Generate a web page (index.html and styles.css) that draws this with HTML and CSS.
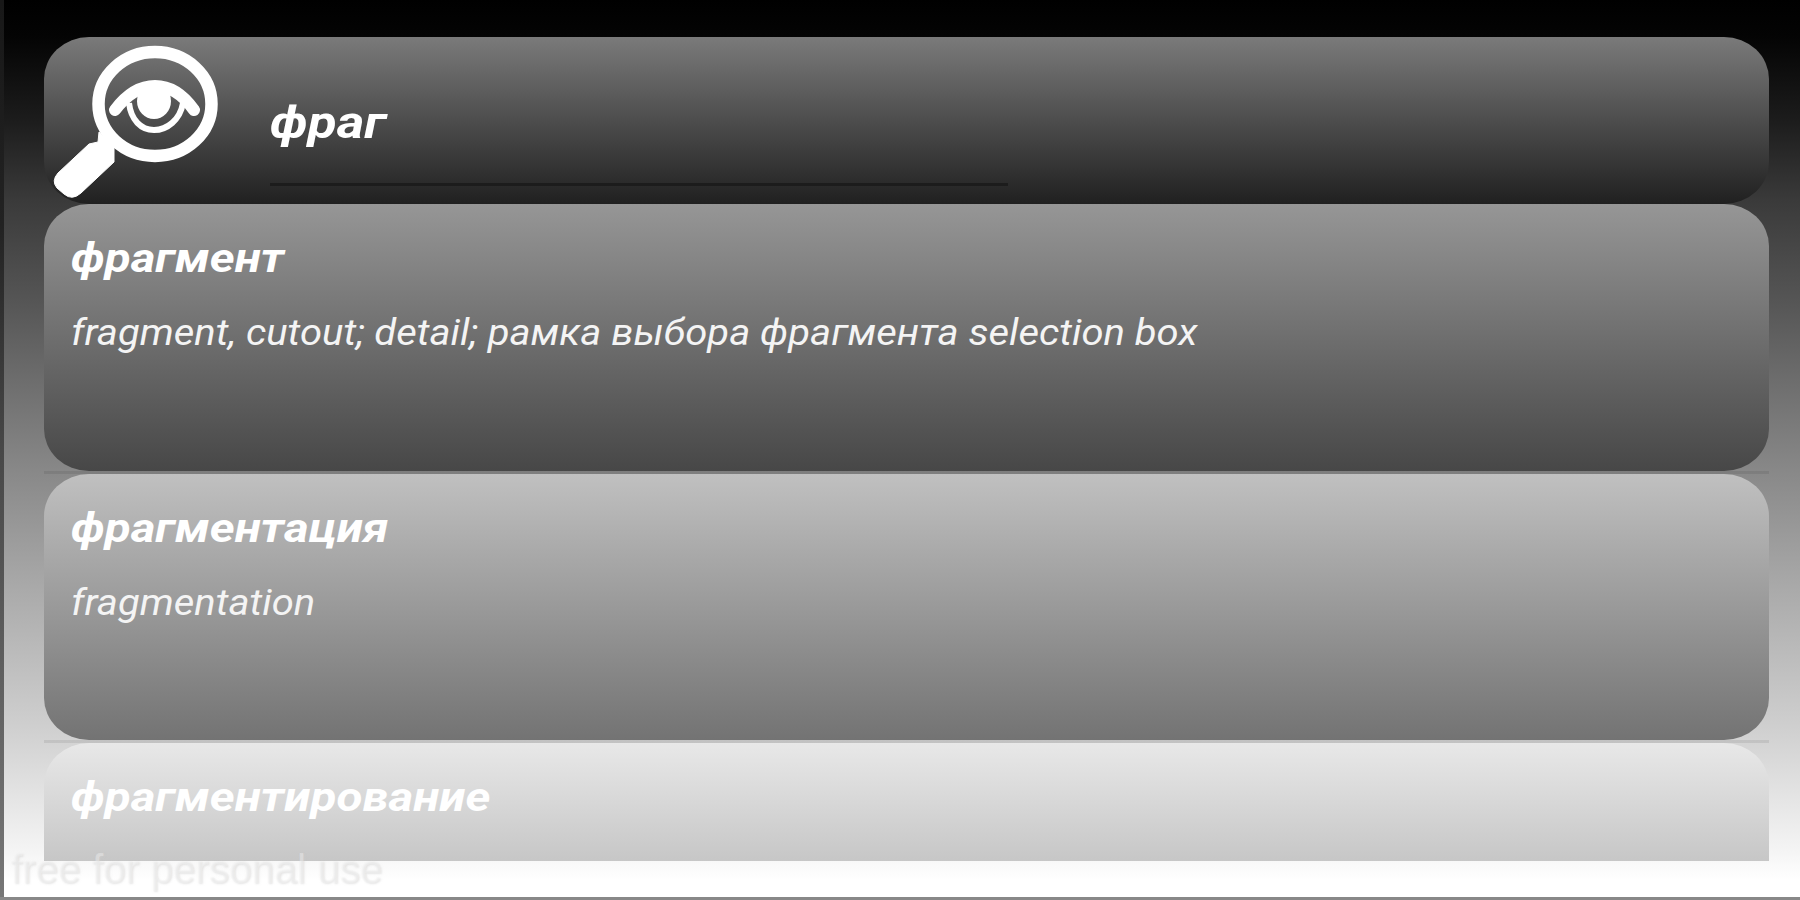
FILE: index.html
```
<!DOCTYPE html>
<html lang="ru">
<head>
  <meta charset="UTF-8">
  <title>Словарь</title>
  <meta name="viewport" content="width=device-width, initial-scale=1.0">
  <link rel="stylesheet" href="styles.css">
</head>
<body>
  <div class="screen">
    <!-- Search bar -->
    <header class="search-bar">
      <svg class="logo" width="176" height="167" viewBox="44 37 176 167" fill="none" stroke="#fff">
        <ellipse cx="155" cy="104" rx="56.5" ry="52" stroke-width="12.5"/>
        <path d="M99 132l15 14v16l-33 31q-9 8-17 1l-7-6q-6-7 1-15l31-29 9-2z" fill="#fff" stroke-width="1"/>
        <path d="M115 110Q133 86 155 86T194 110" stroke-width="12" stroke-linecap="round"/>
        <ellipse cx="154" cy="101" rx="17" ry="18" fill="#fff" stroke="none"/>
        <path d="M129 103c2 17 12 27 25 27s26-10 29-27" stroke-width="6"/>
      </svg>
      <div class="search-field"><span>фраг</span></div>
    </header>

    <!-- Results -->
    <main class="results">
      <article class="card card-dark">
        <h2>фрагмент</h2>
        <p>fragment, cutout; detail; рамка выбора фрагмента selection box</p>
      </article>
      <div class="divider"></div>
      <article class="card card-mid">
        <h2>фрагментация</h2>
        <p>fragmentation</p>
      </article>
      <div class="divider"></div>
      <article class="card card-light">
        <h2>фрагментирование</h2>
      </article>
    </main>
    <div class="watermark">free for personal use</div>
  </div>
</body>
</html>
```
FILE: styles.css
```
* { box-sizing: border-box; }
body {
  font-family: Roboto, Arial, sans-serif;
  margin: 0;
  color: #fff;
}
.screen {
  position: relative;
  height: 900px;
  padding: 37px 31px 0 44px;
  overflow: hidden;
  background:
    linear-gradient(#888, #888) 0 100% / 100% 3px no-repeat,
    linear-gradient(#181818, #222 25%, #484848 50%, #777) 0 0 / 4px 100% no-repeat,
    linear-gradient(#000 0, #040404 36px, #1c1c1c 120px, #3a3a3a 200px, #555 300px, #858585 460px, #aaa 590px, #d0d0d0 730px, #f4f4f4 850px, #fff 880px);
}
.search-bar {
  display: flex;
  height: 167px;
  border-radius: 45px / 42px;
  background: linear-gradient(#7a7a7a, #202020);
}
.logo { flex: none; }
.search-field {
  width: 738px;
  height: 149px;
  margin-left: 50px;
  padding-top: 59px;
  border-bottom: 3px solid #1c1c1c;
  font-size: 45px;
  line-height: 54px;
  font-weight: bold;
  font-style: italic;
}
.search-field span {
  display: inline-block;
  transform: scaleX(1.18);
  transform-origin: left;
}
.results {
  height: 657px;
  overflow: hidden;
}
.card {
  height: 267px;
  padding: 29px 27px;
  border-radius: 45px / 42px;
}
.card-dark { background: linear-gradient(#969696, #474747); }
.card-mid { height: 266px; background: linear-gradient(#c0c0c0, #737373); }
.card-light { background: linear-gradient(#e8e8e8, #9c9c9c); }
.divider {
  height: 3px;
  background: rgba(0, 0, 0, 0.08);
}
.card h2 {
  margin: 0;
  font-size: 41px;
  line-height: 50px;
  font-style: italic;
  transform: scaleX(1.16);
  transform-origin: left;
}
.card p {
  margin: 28px 0 0;
  font-size: 37px;
  line-height: 44px;
  font-style: italic;
  white-space: nowrap;
  color: #f4f4f4;
  transform: scaleX(1.081);
  transform-origin: left;
}
/* sits over the bottom edge of the list */
.watermark {
  position: absolute;
  left: 11px;
  bottom: 8px;
  font-family: "Liberation Sans", Arial, sans-serif;
  font-size: 40.5px;
  line-height: 46px;
  color: rgba(245, 245, 245, 0.4);
  text-shadow: 1px 1px 2px rgba(205, 205, 205, 0.5);
}
```
